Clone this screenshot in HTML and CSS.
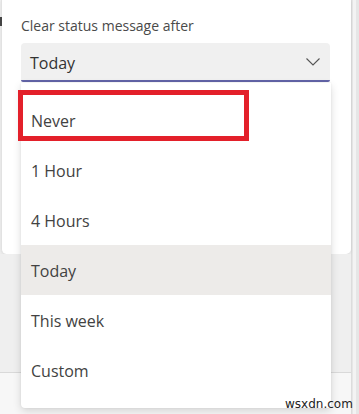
FILE: index.html
```html
<!DOCTYPE html>
<html>
<head>
<meta charset="utf-8">
<link rel="stylesheet" href="styles.css">
</head>
<body>
<div class="screen">
  <div class="main">
    <div class="edge-mark"></div>
    <section class="dialog">
      <div class="label">Clear status message after</div>
      <div class="select">
        <span class="select-value">Today</span>
        <svg class="chevron" width="14" height="8" viewBox="0 0 14 8"><path d="M0.5 0.5 L7 7 L13.5 0.5" fill="none" stroke="#555" stroke-width="1.1"/></svg>
      </div>
    </section>
    <div class="below">
      <div class="below-top"></div>
      <div class="below-bottom"></div>
    </div>
    <ul class="menu">
      <li class="item">Never</li>
      <li class="item">1 Hour</li>
      <li class="item">4 Hours</li>
      <li class="item selected">Today</li>
      <li class="item">This week</li>
      <li class="item">Custom</li>
    </ul>
    <div class="highlight-box"></div>
  </div>
  <div class="scrollbar"><div class="scroll-track"></div></div>
  <div class="watermark">wsxdn.com</div>
</div>
</body>
</html>
```
FILE: styles.css
```css
* { box-sizing: border-box; }
html, body { margin: 0; padding: 0; }
body {
  width: 359px;
  height: 414px;
  overflow: hidden;
  background: #ebebeb;
  font-family: "Open Sans", "Noto Sans", sans-serif;
  color: #424242;
}
.screen {
  position: relative;
  display: flex;
  width: 359px;
  height: 414px;
}
.main {
  position: relative;
  width: 351px;
  display: flex;
  flex-direction: column;
  background: #efefef;
}
.edge-mark {
  position: absolute;
  left: 0;
  top: 17px;
  width: 2px;
  height: 9px;
  background: #444;
}
.dialog {
  height: 254px;
  margin-left: 1px;
  background: #fff;
  border-left: 1px solid #e2e2e2;
  border-radius: 0 0 5px 5px;
  padding: 16px 20px 0 19px;
  box-shadow: 0 1px 3px rgba(0,0,0,0.08);
}
.label {
  font-size: 14px;
  line-height: 19px;
  color: #4a4a4a;
}
.select {
  margin-top: 8px;
  height: 39px;
  width: 309px;
  background: #f0f0f0;
  border-bottom: 2px solid #6264a7;
  border-radius: 4px 4px 2px 2px;
  display: flex;
  align-items: center;
  justify-content: space-between;
  padding: 0 10px 0 9px;
}
.select-value {
  font-size: 16px;
  color: #333;
  padding-top: 2px;
}
.chevron { margin-top: 1px; }
.below {
  flex: 1;
  display: flex;
  flex-direction: column;
}
.below-top {
  height: 119px;
  background: #efefef;
  border-bottom: 1px solid #d9d9d9;
}
.below-bottom {
  flex: 1;
  background: #f7f7f7;
}
.menu {
  position: absolute;
  left: 21px;
  top: 83px;
  width: 310px;
  height: 325px;
  margin: 0;
  padding: 12px 0 13px 0;
  list-style: none;
  background: #fff;
  border-radius: 0 0 4px 4px;
  box-shadow: 0 3px 8px rgba(0,0,0,0.14), 0 0 2px rgba(0,0,0,0.08);
}
.item {
  height: 50px;
  display: flex;
  align-items: center;
  padding-left: 10px;
  padding-top: 2px;
  font-size: 16px;
  color: #424242;
}
.item.selected { background: #edebe9; }
.highlight-box {
  position: absolute;
  left: 18px;
  top: 90px;
  width: 231px;
  height: 51px;
  border: 5px solid #e3202a;
}
.scrollbar {
  width: 8px;
  background: #e6e6e6;
  border-left: 1px solid #dcdcdc;
  display: flex;
}
.scroll-track {
  width: 3px;
  margin-left: 1px;
  background: #f3f3f3;
}
.watermark {
  position: absolute;
  left: 285px;
  top: 396px;
  font-family: "DejaVu Sans", sans-serif;
  font-size: 12px;
  line-height: 16px;
  color: #222;
}
```
